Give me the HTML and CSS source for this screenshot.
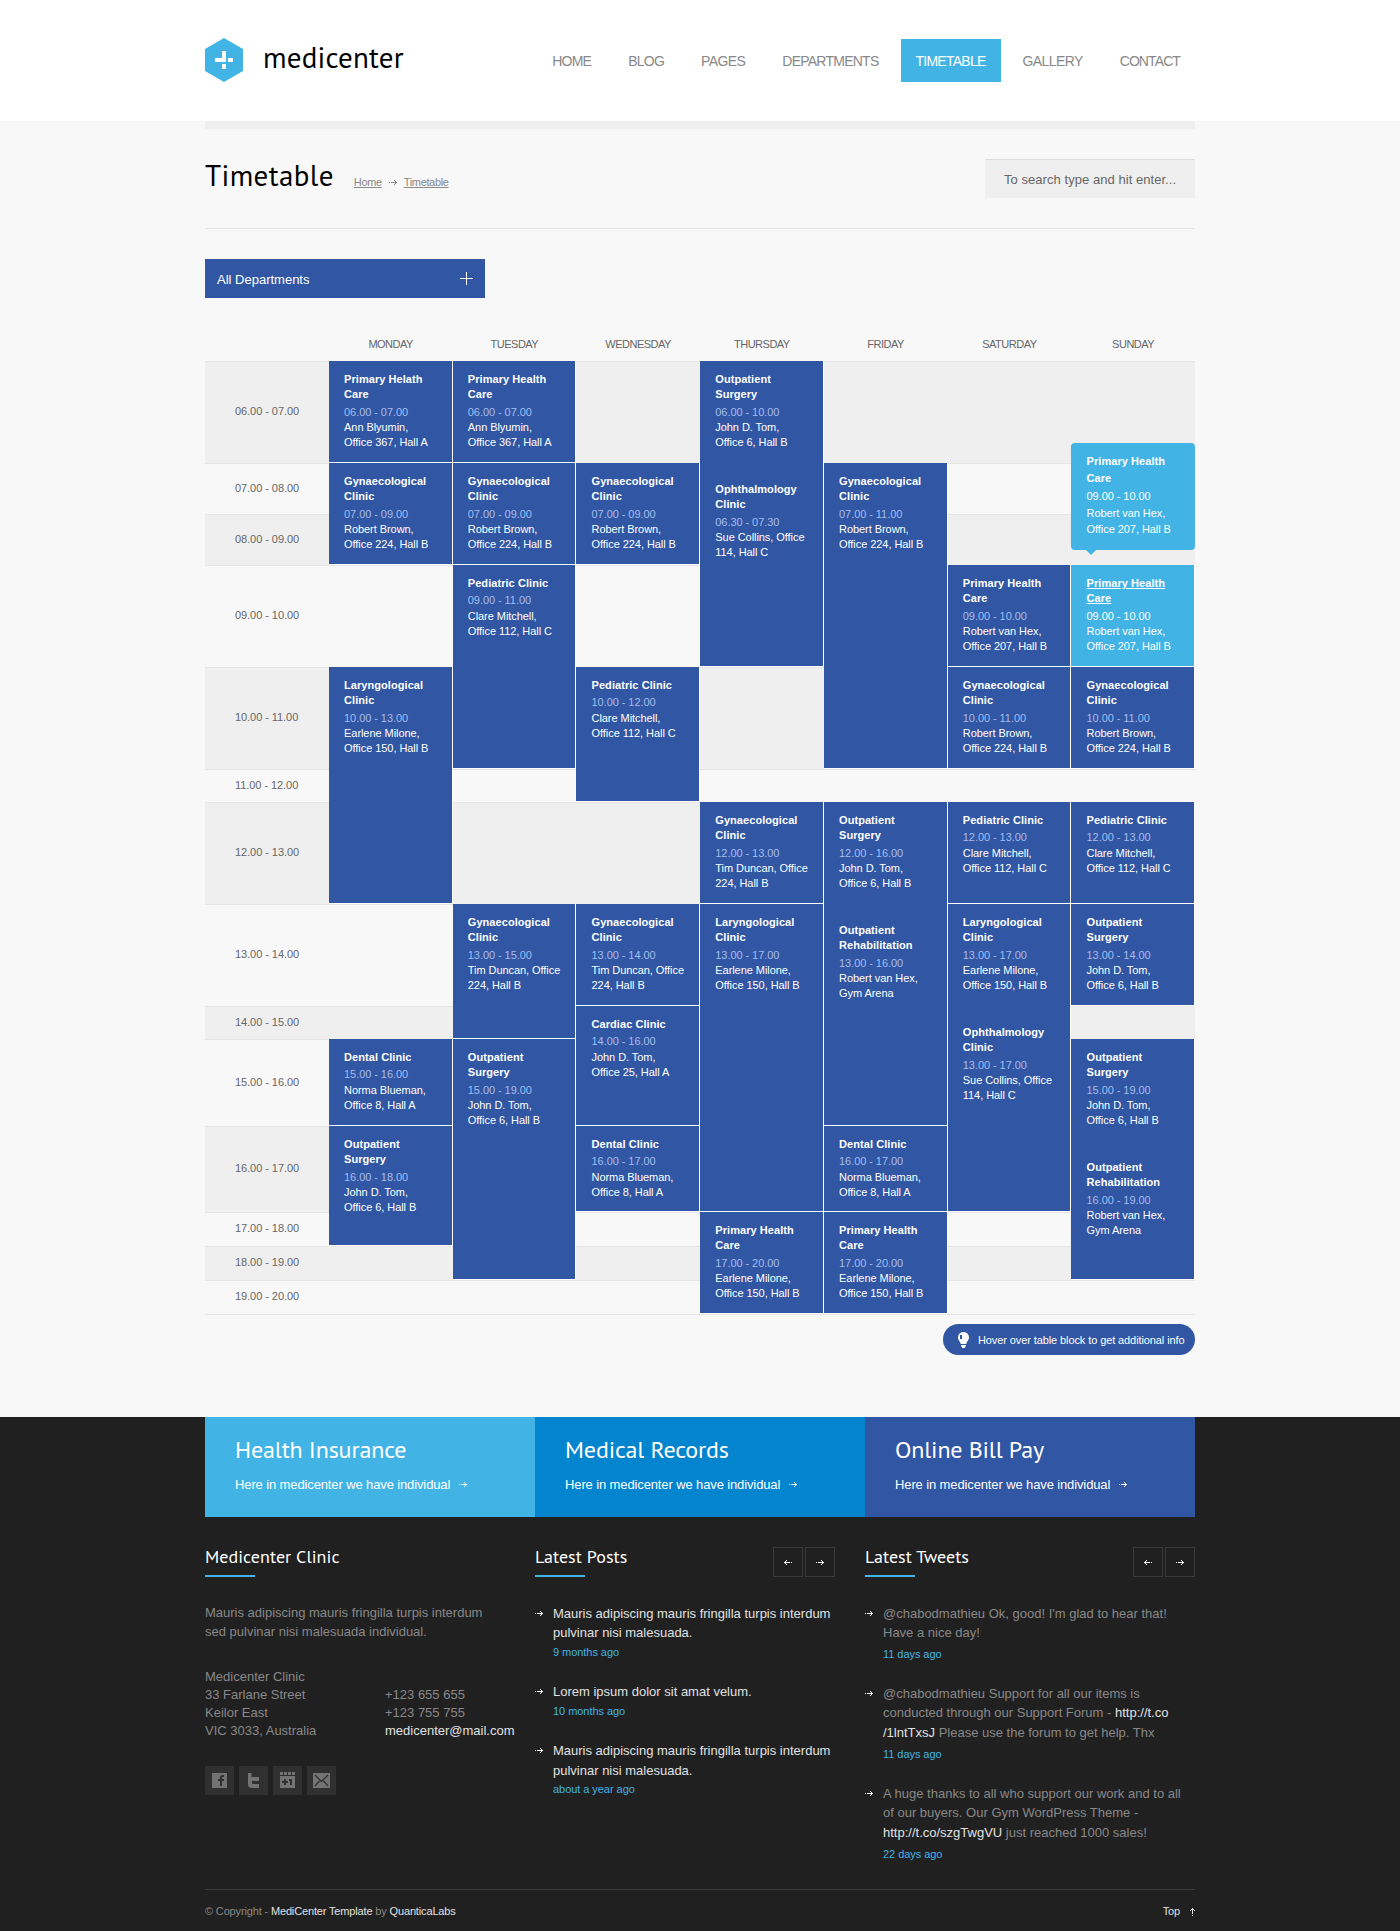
FILE: index.html
```html
<!DOCTYPE html>
<html lang="en">
<head>
<meta charset="utf-8">
<title>Timetable - MediCenter</title>
<link rel="stylesheet" href="styles.css">
</head>
<body>
<svg class="sprite" width="0" height="0" aria-hidden="true">
  <symbol id="arrow-right" viewBox="0 0 8 5"><path d="M0 2h1v1H0zM2 2h6v1H2zM6 1h1v3H6zM5 0h1v1H5zM5 4h1v1H5z"/></symbol>
  <symbol id="arrow-left" viewBox="0 0 8 5"><path d="M7 2h1v1H7zM0 2h6v1H0zM1 1h1v3H1zM2 0h1v1H2zM2 4h1v1H2z"/></symbol>
  <symbol id="arrow-up" viewBox="0 0 5 8"><path d="M2 7h1v1H2zM2 0h1v6H2zM1 1h3v1H1zM0 2h1v1H0zM4 2h1v1H4z"/></symbol>
</svg>

<header class="header">
  <div class="wrap header-row">
    <a class="logo">
      <svg class="logo-mark" width="38" height="44" viewBox="0 0 38 44"><path fill="#42b3e5" d="M19 0l19 11v22L19 44 0 33V11z"/><path fill="#fff" d="M17 13h4v11H10v-4h7zM23 20h5v4h-5zM17 26h4v5h-4z"/></svg>
      <span class="logo-text">medicenter</span>
    </a>
    <nav class="nav">
      <a>HOME</a><a>BLOG</a><a class="loose">PAGES</a><a>DEPARTMENTS</a><a class="active">TIMETABLE</a><a class="loose">GALLERY</a><a class="tight">CONTACT</a>
    </nav>
  </div>
</header>

<main class="wrap main">
  <div class="page-head">
    <h1>Timetable</h1>
    <div class="crumbs"><a>Home</a><svg class="px" width="8" height="5"><use href="#arrow-right"/></svg><a>Timetable</a></div>
    <div class="search">To search type and hit enter...</div>
  </div>

  <div class="dropdown"><span>All Departments</span><svg class="px" width="13" height="13"><path d="M6 0h1v13H6zM0 6h13v1H0z"/></svg></div>

  <div class="days"><span></span><span>MONDAY</span><span>TUESDAY</span><span>WEDNESDAY</span><span>THURSDAY</span><span>FRIDAY</span><span>SATURDAY</span><span>SUNDAY</span></div>

  <div class="timetable">
    <div class="hour r1 odd"><span>06.00 - 07.00</span></div>
    <div class="hour r2"><span>07.00 - 08.00</span></div>
    <div class="hour r3 odd"><span>08.00 - 09.00</span></div>
    <div class="hour r4"><span>09.00 - 10.00</span></div>
    <div class="hour r5 odd"><span>10.00 - 11.00</span></div>
    <div class="hour r6"><span>11.00 - 12.00</span></div>
    <div class="hour r7 odd"><span>12.00 - 13.00</span></div>
    <div class="hour r8"><span>13.00 - 14.00</span></div>
    <div class="hour r9 odd"><span>14.00 - 15.00</span></div>
    <div class="hour r10"><span>15.00 - 16.00</span></div>
    <div class="hour r11 odd"><span>16.00 - 17.00</span></div>
    <div class="hour r12"><span>17.00 - 18.00</span></div>
    <div class="hour r13 odd"><span>18.00 - 19.00</span></div>
    <div class="hour r14"><span>19.00 - 20.00</span></div>

    <div class="cell mon r1"><div class="event"><b>Primary Helath Care</b><i>06.00 - 07.00</i><p>Ann Blyumin,<br>Office 367, Hall A</p></div></div>
    <div class="cell mon r2 s2"><div class="event"><b>Gynaecological Clinic</b><i>07.00 - 09.00</i><p>Robert Brown,<br>Office 224, Hall B</p></div></div>
    <div class="cell mon r5 s3"><div class="event"><b>Laryngological Clinic</b><i>10.00 - 13.00</i><p>Earlene Milone,<br>Office 150, Hall B</p></div></div>
    <div class="cell mon r10"><div class="event"><b>Dental Clinic</b><i>15.00 - 16.00</i><p>Norma Blueman,<br>Office 8, Hall A</p></div></div>
    <div class="cell mon r11 s2"><div class="event"><b>Outpatient Surgery</b><i>16.00 - 18.00</i><p>John D. Tom,<br>Office 6, Hall B</p></div></div>

    <div class="cell tue r1"><div class="event"><b>Primary Health Care</b><i>06.00 - 07.00</i><p>Ann Blyumin,<br>Office 367, Hall A</p></div></div>
    <div class="cell tue r2 s2"><div class="event"><b>Gynaecological Clinic</b><i>07.00 - 09.00</i><p>Robert Brown,<br>Office 224, Hall B</p></div></div>
    <div class="cell tue r4 s2"><div class="event"><b>Pediatric Clinic</b><i>09.00 - 11.00</i><p>Clare Mitchell,<br>Office 112, Hall C</p></div></div>
    <div class="cell tue r8 s2"><div class="event"><b>Gynaecological Clinic</b><i>13.00 - 15.00</i><p>Tim Duncan, Office<br>224, Hall B</p></div></div>
    <div class="cell tue r10 s4"><div class="event"><b>Outpatient Surgery</b><i>15.00 - 19.00</i><p>John D. Tom,<br>Office 6, Hall B</p></div></div>

    <div class="cell wed r2 s2"><div class="event"><b>Gynaecological Clinic</b><i>07.00 - 09.00</i><p>Robert Brown,<br>Office 224, Hall B</p></div></div>
    <div class="cell wed r5 s2"><div class="event"><b>Pediatric Clinic</b><i>10.00 - 12.00</i><p>Clare Mitchell,<br>Office 112, Hall C</p></div></div>
    <div class="cell wed r8"><div class="event"><b>Gynaecological Clinic</b><i>13.00 - 14.00</i><p>Tim Duncan, Office<br>224, Hall B</p></div></div>
    <div class="cell wed r9 s2"><div class="event"><b>Cardiac Clinic</b><i>14.00 - 16.00</i><p>John D. Tom,<br>Office 25, Hall A</p></div></div>
    <div class="cell wed r11"><div class="event"><b>Dental Clinic</b><i>16.00 - 17.00</i><p>Norma Blueman,<br>Office 8, Hall A</p></div></div>

    <div class="cell thu r1 s4"><div class="event"><b>Outpatient Surgery</b><i>06.00 - 10.00</i><p>John D. Tom,<br>Office 6, Hall B</p></div><div class="event"><b>Ophthalmology Clinic</b><i>06.30 - 07.30</i><p>Sue Collins, Office<br>114, Hall C</p></div></div>
    <div class="cell thu r7"><div class="event"><b>Gynaecological Clinic</b><i>12.00 - 13.00</i><p>Tim Duncan, Office<br>224, Hall B</p></div></div>
    <div class="cell thu r8 s4"><div class="event"><b>Laryngological Clinic</b><i>13.00 - 17.00</i><p>Earlene Milone,<br>Office 150, Hall B</p></div></div>
    <div class="cell thu r12 s3"><div class="event"><b>Primary Health Care</b><i>17.00 - 20.00</i><p>Earlene Milone,<br>Office 150, Hall B</p></div></div>

    <div class="cell fri r2 s4"><div class="event"><b>Gynaecological Clinic</b><i>07.00 - 11.00</i><p>Robert Brown,<br>Office 224, Hall B</p></div></div>
    <div class="cell fri r7 s4"><div class="event"><b>Outpatient Surgery</b><i>12.00 - 16.00</i><p>John D. Tom,<br>Office 6, Hall B</p></div><div class="event"><b>Outpatient Rehabilitation</b><i>13.00 - 16.00</i><p>Robert van Hex,<br>Gym Arena</p></div></div>
    <div class="cell fri r11"><div class="event"><b>Dental Clinic</b><i>16.00 - 17.00</i><p>Norma Blueman,<br>Office 8, Hall A</p></div></div>
    <div class="cell fri r12 s3"><div class="event"><b>Primary Health Care</b><i>17.00 - 20.00</i><p>Earlene Milone,<br>Office 150, Hall B</p></div></div>

    <div class="cell sat r4"><div class="event"><b>Primary Health Care</b><i>09.00 - 10.00</i><p>Robert van Hex,<br>Office 207, Hall B</p></div></div>
    <div class="cell sat r5"><div class="event"><b>Gynaecological Clinic</b><i>10.00 - 11.00</i><p>Robert Brown,<br>Office 224, Hall B</p></div></div>
    <div class="cell sat r7"><div class="event"><b>Pediatric Clinic</b><i>12.00 - 13.00</i><p>Clare Mitchell,<br>Office 112, Hall C</p></div></div>
    <div class="cell sat r8 s4"><div class="event"><b>Laryngological Clinic</b><i>13.00 - 17.00</i><p>Earlene Milone,<br>Office 150, Hall B</p></div><div class="event"><b>Ophthalmology Clinic</b><i>13.00 - 17.00</i><p>Sue Collins, Office<br>114, Hall C</p></div></div>

    <div class="cell sun r4 hovered"><div class="event"><b>Primary Health Care</b><i>09.00 - 10.00</i><p>Robert van Hex,<br>Office 207, Hall B</p></div>
      <div class="tooltip"><div class="event"><b>Primary Health Care</b><i>09.00 - 10.00</i><p>Robert van Hex,<br>Office 207, Hall B</p></div></div>
    </div>
    <div class="cell sun r5"><div class="event"><b>Gynaecological Clinic</b><i>10.00 - 11.00</i><p>Robert Brown,<br>Office 224, Hall B</p></div></div>
    <div class="cell sun r7"><div class="event"><b>Pediatric Clinic</b><i>12.00 - 13.00</i><p>Clare Mitchell,<br>Office 112, Hall C</p></div></div>
    <div class="cell sun r8"><div class="event"><b>Outpatient Surgery</b><i>13.00 - 14.00</i><p>John D. Tom,<br>Office 6, Hall B</p></div></div>
    <div class="cell sun r10 s4"><div class="event"><b>Outpatient Surgery</b><i>15.00 - 19.00</i><p>John D. Tom,<br>Office 6, Hall B</p></div><div class="event"><b>Outpatient Rehabilitation</b><i>16.00 - 19.00</i><p>Robert van Hex,<br>Gym Arena</p></div></div>
  </div>

  <div class="tip">
    <svg width="11" height="16" viewBox="0 0 11 16"><path fill="#fff" d="M5.500 0A5.400 5.400 0 0 1 11 5.500C11 8.500 8.500 9.500 8.300 12H2.700C2.500 9.500 0 8.500 0 5.500A5.400 5.400 0 0 1 5.500 0zM3 13h5v1.500H3zM4 14.500h3V16H4z"/><path fill="#3156a3" d="M2 3h2v4H2z"/></svg>
    <span>Hover over table block to get additional info</span>
  </div>
</main>

<footer class="footer">
  <div class="wrap">
    <div class="banners">
      <a class="banner light"><h2>Health Insurance</h2><p>Here in medicenter we have individual<svg class="px" width="8" height="5"><use href="#arrow-right"/></svg></p></a>
      <a class="banner mid"><h2>Medical Records</h2><p>Here in medicenter we have individual<svg class="px" width="8" height="5"><use href="#arrow-right"/></svg></p></a>
      <a class="banner dark"><h2>Online Bill Pay</h2><p>Here in medicenter we have individual<svg class="px" width="8" height="5"><use href="#arrow-right"/></svg></p></a>
    </div>

    <div class="columns">
      <section class="about">
        <div class="box-head"><h3>Medicenter Clinic</h3></div>
        <p class="intro">Mauris adipiscing mauris fringilla turpis interdum<br>sed pulvinar nisi malesuada individual.</p>
        <div class="contact">
          <div>Medicenter Clinic<br>33 Farlane Street<br>Keilor East<br>VIC 3033, Australia</div>
          <div class="phones">+123 655 655<br>+123 755 755<br><a>medicenter@mail.com</a></div>
        </div>
        <div class="social">
          <a><svg width="15" height="15" viewBox="0 0 15 15"><path fill="#737373" d="M0 0h15v15H0z"/><path fill="#303030" d="M8 13V8H6V6h2V4.500Q8 2 10.500 2H12v2h-1q-1 0-1 1v1h2v2h-2v5z"/></svg></a>
          <a><svg width="15" height="15" viewBox="0 0 15 15"><path fill="#737373" d="M2 0h3.500v4H13v4H6v2q0 1 1 1h6v4H6q-4 0-4-4z"/></svg></a>
          <a><svg class="plus-one" width="15" height="16" viewBox="0 0 15 16"><path fill="#737373" d="M0 4h15v12H0zM0 0h3v3H0zM4 0h3v3H4zM8 0h3v3H8zM12 0h3v3h-3z"/><path fill="#303030" d="M4 7h2v2h2v2H6v2H4v-2H2V9h2zM9 7h3v6h-2V9H9z"/></svg></a>
          <a><svg width="17" height="15" viewBox="0 0 17 15"><path fill="#737373" d="M0 0h17v15H0z"/><path fill="none" stroke="#303030" stroke-width="1.300" d="M2 2l6.500 6.500L15 2M2 13l4.500-5M15 13l-4.500-5"/></svg></a>
        </div>
      </section>

      <section class="posts">
        <div class="box-head"><h3>Latest Posts</h3><div class="pager"><a><svg class="px" width="8" height="5"><use href="#arrow-left"/></svg></a><a><svg class="px" width="8" height="5"><use href="#arrow-right"/></svg></a></div></div>
        <ul class="feed">
          <li><svg class="px" width="8" height="5"><use href="#arrow-right"/></svg><div>Mauris adipiscing mauris fringilla turpis interdum<br>pulvinar nisi malesuada.<time>9 months ago</time></div></li>
          <li><svg class="px" width="8" height="5"><use href="#arrow-right"/></svg><div>Lorem ipsum dolor sit amat velum.<time>10 months ago</time></div></li>
          <li><svg class="px" width="8" height="5"><use href="#arrow-right"/></svg><div>Mauris adipiscing mauris fringilla turpis interdum<br>pulvinar nisi malesuada.<time>about a year ago</time></div></li>
        </ul>
      </section>

      <section class="tweets">
        <div class="box-head"><h3>Latest Tweets</h3><div class="pager"><a><svg class="px" width="8" height="5"><use href="#arrow-left"/></svg></a><a><svg class="px" width="8" height="5"><use href="#arrow-right"/></svg></a></div></div>
        <ul class="feed">
          <li><svg class="px" width="8" height="5"><use href="#arrow-right"/></svg><div>@chabodmathieu Ok, good! I'm glad to hear that!<br>Have a nice day!<time>11 days ago</time></div></li>
          <li><svg class="px" width="8" height="5"><use href="#arrow-right"/></svg><div>@chabodmathieu Support for all our items is<br>conducted through our Support Forum - <a>http://t.co<br>/1lntTxsJ</a> Please use the forum to get help. Thx<time>11 days ago</time></div></li>
          <li><svg class="px" width="8" height="5"><use href="#arrow-right"/></svg><div>A huge thanks to all who support our work and to all<br>of our buyers. Our Gym WordPress Theme -<br><a>http://t.co/szgTwgVU</a> just reached 1000 sales!<time>22 days ago</time></div></li>
        </ul>
      </section>
    </div>

    <div class="copyright">
      <span>© Copyright - <a>MediCenter Template</a> by <a>QuanticaLabs</a></span>
      <a class="top">Top<svg class="px" width="5" height="8"><use href="#arrow-up"/></svg></a>
    </div>
  </div>
</footer>
</body>
</html>
```
FILE: styles.css
```css
* { box-sizing: border-box; margin: 0; padding: 0; }

body {
  background: #f8f8f8;
  color: #666;
  font: 13px/19.5px "Liberation Sans", Arial, sans-serif;
}

h1, h2, h3, .logo-text {
  font-family: "PT Sans", "Noto Sans", sans-serif;
  font-weight: 400;
}

.sprite { position: absolute; }
.px { fill: currentColor; shape-rendering: crispEdges; flex: none; }
.wrap { width: 990px; margin: 0 auto; }

/* Header */
.header { height: 121px; background: #fff; }
.header-row { display: flex; justify-content: space-between; padding-top: 38px; }
.logo { display: flex; gap: 20px; }
.logo-text { color: #000; font-size: 29px; line-height: 38px; letter-spacing: 0.2px; white-space: nowrap; }
.nav { display: flex; gap: 7px; padding-top: 1px; }
.nav a {
  height: 43px;
  padding: 0 15px;
  color: #888;
  font-size: 14px;
  line-height: 44px;
  letter-spacing: -0.75px;
}
.nav .loose { letter-spacing: -0.6px; }
.nav .tight { letter-spacing: -0.9px; }
.nav .active { background: #42b3e5; color: #fff; }

/* Page heading */
.page-head {
  display: flex;
  height: 108px;
  padding-top: 30px;
  border-top: 8px solid #efefef;
  border-bottom: 1px solid #e5e5e5;
}
h1 { color: #000; font-size: 29px; line-height: 32px; letter-spacing: 0.4px; }
.crumbs { display: flex; align-items: center; gap: 7px; margin-left: 20px; height: 17px; margin-top: 15px; color: #888; font-size: 11px; letter-spacing: -0.35px; }
.crumbs a { text-decoration: underline; }
.search {
  width: 210px;
  height: 39px;
  margin-left: auto;
  padding-left: 19px;
  border-top: 1px solid #ddd;
  background: #efefef;
  line-height: 39px;
  letter-spacing: 0.05px;
}

.dropdown {
  display: flex;
  justify-content: space-between;
  align-items: center;
  width: 280px;
  height: 39px;
  margin-top: 30px;
  padding: 0 12px;
  background: #3156a3;
  color: #fff;
}
.dropdown span { padding-top: 2px; }

/* Timetable */
.days, .timetable { display: grid; grid-template-columns: repeat(8, 1fr); }
.days { height: 63px; padding-top: 38px; font-size: 11px; line-height: 16px; text-align: center; letter-spacing: -0.5px; }
.timetable {
  grid-template-rows: 102px 51px 51px 102px 102px 33px 102px 102px 33px 87px 86px 34px 34px 34px;
  border-bottom: 1px solid #e5e5e5;
  font-size: 11px;
  line-height: 15.4px;
  letter-spacing: -0.06px;
}
.hour {
  display: flex;
  align-items: center;
  grid-column: 1 / -1;
  padding: 0 0 1px 30px;
  border-top: 1px solid #e5e5e5;
}
.hour.odd { background: #efefef; }

.r1 { grid-row-start: 1; } .r2 { grid-row-start: 2; } .r3 { grid-row-start: 3; }
.r4 { grid-row-start: 4; } .r5 { grid-row-start: 5; } .r6 { grid-row-start: 6; }
.r7 { grid-row-start: 7; } .r8 { grid-row-start: 8; } .r9 { grid-row-start: 9; }
.r10 { grid-row-start: 10; } .r11 { grid-row-start: 11; } .r12 { grid-row-start: 12; }
.r13 { grid-row-start: 13; } .r14 { grid-row-start: 14; }
.s2 { grid-row-end: span 2; } .s3 { grid-row-end: span 3; } .s4 { grid-row-end: span 4; }
.mon { grid-column: 2; } .tue { grid-column: 3; } .wed { grid-column: 4; } .thu { grid-column: 5; }
.fri { grid-column: 6; } .sat { grid-column: 7; } .sun { grid-column: 8; }

.cell {
  position: relative;
  padding: 10.6px 0 0 15.3px;
  border: solid #fff;
  border-width: 0 1px 1px 0;
  background: #3156a3;
  color: #fff;
}
.event b, .event i { display: block; font-style: normal; }
.event b { padding-right: 20px; letter-spacing: 0.06px; }
.event i { margin-top: 2.2px; color: #a5bdf0; }
.event p { white-space: nowrap; }
.event + .event { margin-top: 30.8px; }
.hovered { background: #42b3e5; }
.hovered i { color: #fff; }
.hovered > .event b { text-decoration: underline; }

.tooltip {
  position: absolute;
  z-index: 1;
  left: 0;
  right: -1px;
  bottom: 116px;
  height: 107px;
  padding: 10px 0 0 15.3px;
  border-radius: 4px;
  background: #42b3e5;
  line-height: 16.5px;
}
.tooltip::after {
  content: "";
  position: absolute;
  left: 15px;
  top: 100%;
  border: solid transparent;
  border-width: 5px 5px 0;
  border-top-color: #42b3e5;
}

.tip {
  display: flex;
  align-items: center;
  width: 252px;
  height: 31px;
  margin: 9px 0 62px auto;
  padding-left: 15px;
  gap: 9px;
  border-radius: 16px;
  background: #3156a3;
  color: #fff;
  font-size: 11px;
  letter-spacing: -0.1px;
  white-space: nowrap;
}
.tip span { padding-top: 2px; }

/* Footer */
.footer { height: 514px; background: #202020; color: #888; }
.footer a { color: #e0e0e0; }
.banners { display: grid; grid-template-columns: repeat(3, 1fr); height: 100px; }
.banner { padding: 16px 30px 0; }
.banner.light { background: #42b3e5; }
.banner.mid { background: #0384ce; }
.banner.dark { background: #3156a3; }
.banner h2 { color: #fff; font-size: 24px; line-height: 34px; letter-spacing: -0.15px; }
.banner p { display: flex; align-items: center; gap: 9px; margin-top: 8px; color: #fff; line-height: 19px; letter-spacing: -0.12px; }

.columns { display: grid; grid-template-columns: 330px 330px 330px; height: 373px; padding-top: 30px; border-bottom: 1px solid #393939; }
.posts { padding-right: 30px; }
.box-head { display: flex; justify-content: space-between; height: 30px; }
h3 { position: relative; color: #fff; font-size: 18px; line-height: 20px; letter-spacing: 0.05px; }
h3::after { content: ""; position: absolute; left: 0; top: 28px; width: 50px; height: 2px; background: #42b3e5; }
.pager { display: flex; gap: 2px; }
.footer .pager a { display: flex; align-items: center; justify-content: center; width: 30px; height: 30px; border: 1px solid #393939; color: #fff; }
.intro { margin-top: 26px; line-height: 19px; }
.contact { display: flex; margin-top: 27px; line-height: 18px; }
.contact div { flex: none; width: 180px; white-space: nowrap; }
.contact .phones { width: auto; padding-top: 18px; }
.social { display: flex; gap: 5px; margin-top: 26px; }
.social a { display: flex; align-items: center; justify-content: center; width: 29px; height: 29px; background: #303030; }
.plus-one { margin-bottom: 1px; }

.feed { list-style: none; margin-top: 26.6px; }
.feed li { display: flex; gap: 10px; margin-bottom: 22px; white-space: nowrap; }
.feed li > svg { margin-top: 7px; color: #fff; }
.feed time { display: block; margin-top: 1px; color: #42b3e5; font-size: 11px; line-height: 16.5px; letter-spacing: -0.05px; }
.posts .feed { color: #e0e0e0; }
.tweets .feed time { margin-top: 3.5px; }
.tweets .feed li { margin-bottom: 21.3px; }

.copyright { display: flex; justify-content: space-between; padding-top: 12px; font-size: 11px; letter-spacing: -0.15px; }
.top { display: flex; align-items: center; gap: 10px; }
```
